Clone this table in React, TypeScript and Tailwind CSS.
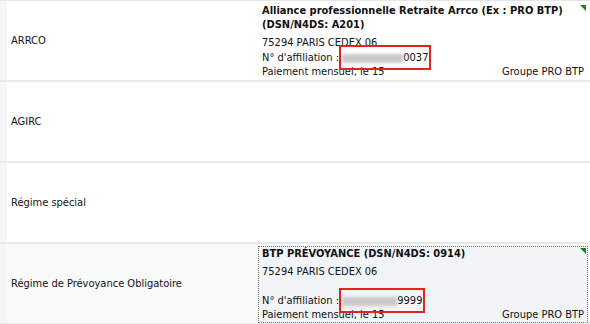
import React from "react"

interface Caisse {
  label: string
  title?: string
  address?: string
  affVisible?: string
  blurWidth?: number
  payment?: string
  group?: string
  active?: boolean
}

const rows: Caisse[] = [
  {
    label: "ARRCO",
    title: "Alliance professionnelle Retraite Arrco (Ex : PRO BTP) (DSN/N4DS: A201)",
    address: "75294 PARIS CEDEX 06",
    affVisible: "0037",
    blurWidth: 61,
    payment: "Paiement mensuel, le 15",
    group: "Groupe PRO BTP",
  },
  { label: "AGIRC" },
  { label: "Régime spécial" },
  {
    label: "Régime de Prévoyance Obligatoire",
    title: "BTP PRÉVOYANCE (DSN/N4DS: 0914)",
    address: "75294 PARIS CEDEX 06",
    affVisible: "9999",
    blurWidth: 55,
    payment: "Paiement mensuel, le 15",
    group: "Groupe PRO BTP",
    active: true,
  },
]

function CaisseCard({ row }: { row: Caisse }) {
  return (
    <div
      className={`relative flex-1 flex flex-col justify-between px-[3px] border border-dotted ${
        row.active ? "border-[#777] bg-[#f1f5f7]" : "border-transparent"
      }`}
    >
      <div className="absolute top-[1px] right-[1px] w-0 h-0 border-t-[6px] border-l-[6px] border-t-[#1e7d1e] border-l-transparent" />
      <div>
        <div className="font-bold leading-[14px] pr-4">{row.title}</div>
        <div className="leading-[14px] mt-[4px]">{row.address}</div>
      </div>
      <div>
        <div className="leading-[14px] flex items-center">
          <span>N° d'affiliation :&nbsp;</span>
          <span className="relative inline-flex items-center">
            <span
              className="inline-block h-[9px] bg-[#c9c9c9] blur-[1.5px]"
              style={{ width: row.blurWidth }}
            />
            <span>{row.affVisible}</span>
            <span className="absolute -left-[3px] -right-[3px] top-[-6px] bottom-[-5px] border-2 border-[#e5231d]" />
          </span>
        </div>
        <div className="leading-[13px] flex justify-between pb-[1px]">
          <span>{row.payment}</span>
          <span>{row.group}</span>
        </div>
      </div>
    </div>
  )
}

export default function App() {
  return (
    <div
      className="w-[590px] h-[324px] overflow-hidden bg-white text-[11px] text-[#111] border-t border-[#e6e6e6]"
      style={{ fontFamily: '"DejaVu Sans Condensed", "DejaVu Sans", sans-serif' }}
    >
      {rows.map((row) => (
        <div
          key={row.label}
          className={`flex h-[81px] border-b-2 border-[#e9e9e9] ${row.active ? "bg-[#f8f9f9]" : "bg-white"}`}
        >
          <div className="w-[7px] bg-[#f6f6f6]" />
          <div className="w-[251px] flex items-center pl-[4px] pt-[1px]">{row.label}</div>
          <div className="flex-1 flex flex-col pt-[2px] pr-[2px]">
            {row.title ? <CaisseCard row={row} /> : null}
          </div>
        </div>
      ))}
    </div>
  )
}
